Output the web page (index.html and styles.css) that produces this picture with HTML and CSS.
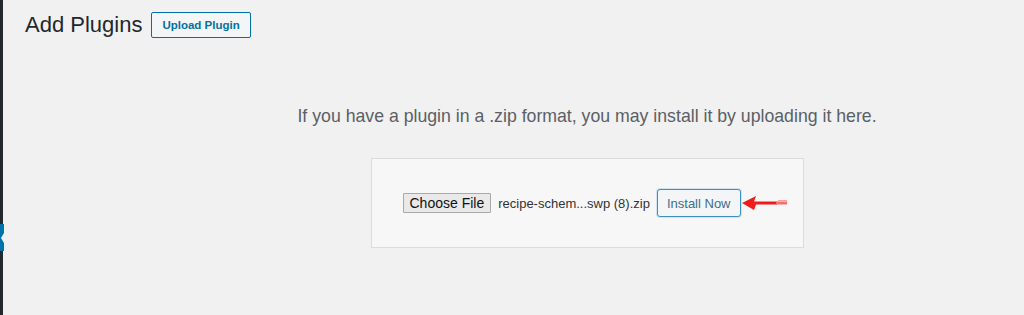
FILE: index.html
```html
<!DOCTYPE html>
<html lang="en">
<head>
    <meta charset="UTF-8">
    <meta name="viewport" content="width=device-width, initial-scale=1.0">
    <title>Add Plugins</title>
    <link rel="stylesheet" href="styles.css">
</head>
<body>
    <div class="admin">
        <div class="sidebar">
            <span class="menu-current"></span>
        </div>
        <main class="content">
            <div class="page-head">
                <h1>Add Plugins</h1>
                <a href="#" class="btn-outline">Upload Plugin</a>
            </div>
            <div class="upload">
                <p class="hint">If you have a plugin in a .zip format, you may install it by uploading it here.</p>
                <form class="upload-box">
                    <button type="button" class="choose-file">Choose File</button>
                    <span class="file-name">recipe-schem...swp (8).zip</span>
                    <span class="install-wrap">
                        <button type="submit" class="install">Install Now</button>
                        <svg class="arrow" width="48" height="16" viewBox="0 0 48 16">
                            <polygon points="0,8 14,1 12,6.5 14,9.5 12,15" fill="#ee1c1c"/>
                            <rect x="11" y="6.5" width="24" height="3" fill="#ee1c1c"/>
                            <rect x="34" y="6.5" width="11" height="3" fill="#f07070"/>
                            <rect x="36" y="5" width="9" height="1" fill="#f4a0a0"/>
                        </svg>
                    </span>
                </form>
            </div>
        </main>
    </div>
</body>
</html>
```

FILE: styles.css
```css
body {
    margin: 0;
    background: #f1f1f1;
    font-family: "Liberation Sans", Arial, sans-serif;
    color: #23282d;
}
.admin {
    display: flex;
    min-height: 315px;
}
.sidebar {
    width: 3px;
    background: #23282d;
    position: relative;
    flex-shrink: 0;
}
.menu-current {
    position: absolute;
    left: 0;
    top: 224px;
    width: 4px;
    height: 27px;
    background: #0073aa;
}
.menu-current::after {
    content: "";
    position: absolute;
    right: 0;
    top: 9px;
    border-style: solid;
    border-width: 5px 3px 5px 0;
    border-color: transparent #f1f1f1 transparent transparent;
}
.content {
    flex: 1;
    padding: 12px 22px 0 22px;
}
.page-head {
    display: flex;
    align-items: center;
    gap: 9px;
}
h1 {
    margin: 0;
    font-size: 22px;
    font-weight: normal;
    color: #23282d;
}
.btn-outline {
    display: inline-block;
    box-sizing: border-box;
    height: 26px;
    line-height: 24px;
    padding: 0 10px;
    border: 1px solid #0071a1;
    border-radius: 2px;
    background: #f3f5f6;
    color: #0071a1;
    font-size: 11.5px;
    font-weight: bold;
    text-decoration: none;
}
.upload {
    display: flex;
    flex-direction: column;
    align-items: center;
    padding-left: 147px;
}
.hint {
    margin: 68px 0 0 0;
    font-size: 17.7px;
    color: #5a6066;
}
.upload-box {
    display: flex;
    align-items: center;
    box-sizing: border-box;
    width: 433px;
    height: 90px;
    margin-top: 31px;
    padding: 0 0 0 31px;
    background: #f7f7f7;
    border: 1px solid #dcdcde;
}
.choose-file {
    box-sizing: border-box;
    height: 20px;
    padding: 0 6px;
    background: #e9e9e9;
    border: 1px solid #a9a9a9;
    border-radius: 1px;
    font-family: "Liberation Sans", Arial, sans-serif;
    font-size: 14px;
    color: #111;
}
.file-name {
    margin-left: 7px;
    font-size: 13px;
    color: #333;
}
.install-wrap {
    position: relative;
    margin-left: 7px;
}
.install {
    box-sizing: border-box;
    height: 28px;
    padding: 0 9px;
    background: #f3f5f6;
    border: 1px solid #3e8fc2;
    border-radius: 3px;
    font-family: "Liberation Sans", Arial, sans-serif;
    font-size: 13px;
    color: #3d6f8f;
    box-shadow: 0 0 0 1px #cfe3f0;
}
.arrow {
    position: absolute;
    left: 85px;
    top: 6px;
}
```
